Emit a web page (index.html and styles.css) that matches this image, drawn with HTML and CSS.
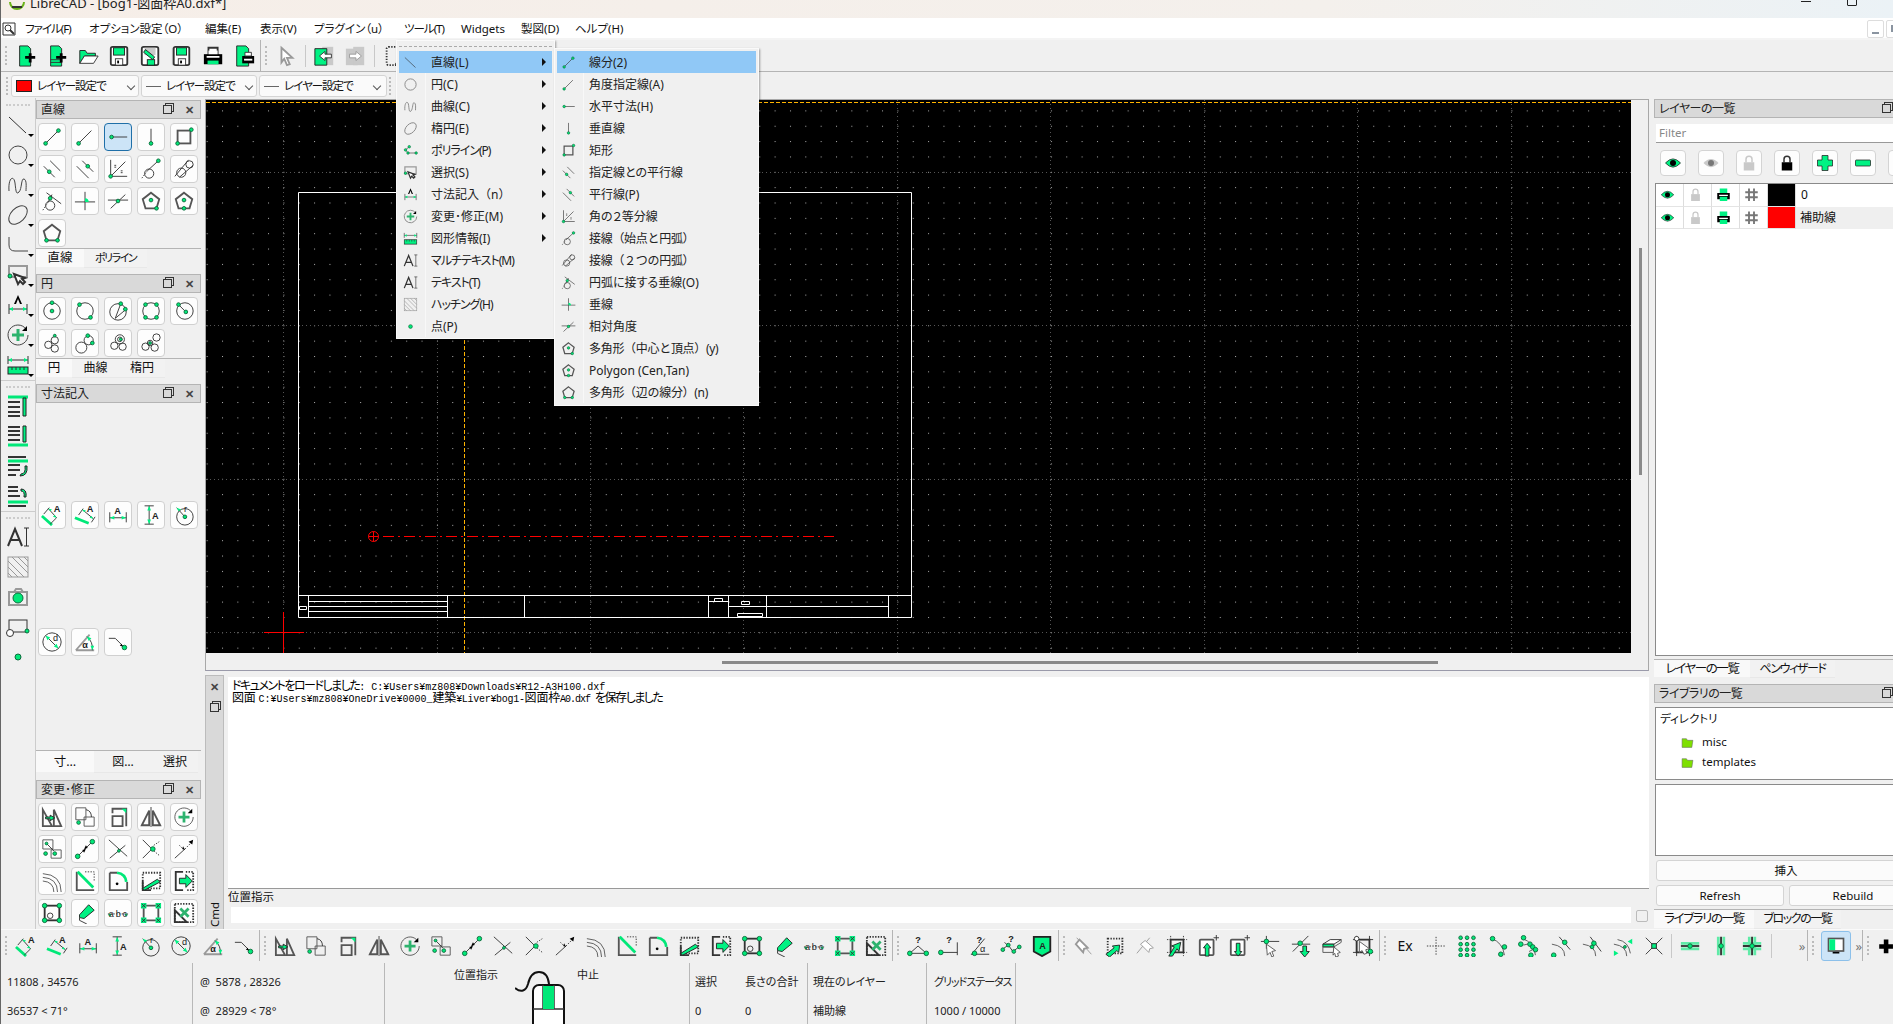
FILE: index.html
```html
<!DOCTYPE html>
<html>
<head>
    <meta charset="utf-8">
    <title>LibreCAD</title>
    <link rel="stylesheet" href="styles.css">
</head>
<body>
<svg class="defs">
    <!-- top toolbar -->
    <symbol id="new" viewBox="0 0 24 24"><path class="gf" d="M5 1h9l3 3v19H5z"/><path class="bk" d="M15 9h3v3h4v3h-4v4h-3v-4h-4v-3h4z"/></symbol>
    <symbol id="newt" viewBox="0 0 24 24"><path class="gf" d="M5 1h9l3 3v19H5z"/><path d="M5 16h12M5 19h12"/><path class="bk" d="M15 9h3v3h4v3h-4v4h-3v-4h-4v-3h4z"/></symbol>
    <symbol id="open" viewBox="0 0 24 24"><path class="gf" d="M3 20V6h6l2 3h9v3H8z"/><path class="wf" d="M3 20l5-8h15l-5 8z"/></symbol>
    <symbol id="save" viewBox="0 0 24 24"><rect class="wf th" x="3" y="2" width="18" height="20" rx="2"/><rect class="gf" x="6" y="3" width="12" height="8"/><rect class="wf" x="8" y="15" width="8" height="7"/><rect class="bk" x="10" y="17" width="2" height="3"/></symbol>
    <symbol id="saveas" viewBox="0 0 24 24"><rect class="wf th" x="3" y="2" width="18" height="20" rx="2"/><rect class="gb" x="6" y="3" width="12" height="8"/><rect class="gf" x="9" y="16" width="8" height="6"/><path class="gf" d="M7 5l10 8-2 3L5 8z"/></symbol>
    <symbol id="saveall" viewBox="0 0 24 24"><path class="gb" d="M2 3h4v19H2z"/><rect class="wf th" x="4" y="2" width="17" height="20" rx="2"/><rect class="gf" x="7" y="3" width="11" height="8"/><rect class="wf" x="9" y="15" width="8" height="7"/><rect class="bk" x="11" y="17" width="2" height="3"/></symbol>
    <symbol id="print" viewBox="0 0 24 24"><path class="wf th" d="M7 3h10v7H7z"/><path class="bk" d="M2 10h20v11H2z"/><path class="gfn" d="M6 17h12v4H6z"/><path class="wfn" d="M7 6h10v4H7zM5 12h14v2H5z"/></symbol>
    <symbol id="prev" viewBox="0 0 24 24"><path class="gf" d="M4 1h10l3 3v19H4z"/><path class="bk" d="M10 12h13v8H10z"/><path class="wfn" d="M12 15h9v2h-9z"/><path class="wf" d="M13 8h7v4h-7z"/></symbol>
    <symbol id="arrow" viewBox="0 0 24 24"><path class="wf gy th" d="M7 3l12 11h-6l3 7-3 1-3-7-3 4z"/></symbol>
    <symbol id="undo" viewBox="0 0 24 24"><path class="gb" d="M10 2h12v20H10z"/><path class="gf" d="M2 4h13v18H2z"/><path class="wf" d="M7 12l6-5v3h7v4h-7v3z"/></symbol>
    <symbol id="redo" viewBox="0 0 24 24"><path class="gb" d="M2 4h13v18H2z"/><path class="gb" d="M10 2h12v20H10z"/><path class="wf gy" d="M6 10h7V7l6 5-6 5v-3H6z"/></symbol>
    <symbol id="cut" viewBox="0 0 24 24"><rect class="da th" x="5" y="2" width="14" height="20" rx="2"/><path d="M16 10l3 9M20 10l-3 9"/><circle cx="16" cy="21" r="1.5"/><circle cx="20" cy="21" r="1.5"/></symbol>
    <!-- main tool menu -->
    <symbol id="tline" viewBox="0 0 24 24"><path d="M3 4l17 16"/></symbol>
    <symbol id="tcirc" viewBox="0 0 24 24"><circle class="gy2" cx="12" cy="12" r="9"/></symbol>
    <symbol id="tspl" viewBox="0 0 24 24"><path class="gy2" d="M3 18C2 4 8 2 9 10s1 12 4 9 2-14 5-13 2 8 2 12"/></symbol>
    <symbol id="tell" viewBox="0 0 24 24"><ellipse class="gy2" cx="12" cy="12" rx="11" ry="7" transform="rotate(-45 12 12)"/></symbol>
    <symbol id="tpoly" viewBox="0 0 24 24"><path d="M10 6L4 11l4 5h14"/><circle class="n" cx="10" cy="6" r="2"/><circle class="n" cx="4" cy="11" r="2"/><circle class="n" cx="8" cy="16" r="2"/><circle class="n" cx="21" cy="16" r="2"/></symbol>
    <symbol id="tpl2" viewBox="0 0 24 24"><path class="gy2" d="M3 4v8q0 6 6 6h13"/></symbol>
    <symbol id="tsel" viewBox="0 0 24 24"><rect class="gy th" x="3" y="3" width="18" height="11"/><path class="wf th" d="M8 11l4 10 2-3 3 3 2-2-3-3 3-1z"/><circle class="n" cx="4" cy="13" r="2"/></symbol>
    <symbol id="tdim" viewBox="0 0 24 24"><path d="M3 11v10M21 11v10M3 16h18"/><path class="gfn" d="M3 16l4-2v4zM21 16l-4-2v4z"/><path class="bk" d="M8 11l4-9 4 9h-2l-2-5-2 5z"/></symbol>
    <symbol id="tmod" viewBox="0 0 24 24"><path class="gy2" d="M20 6a10 10 0 1 0 2 6"/><path class="gs2" d="M12 6v12M6 12h12"/><path class="bk" d="M21 3v5h-5z"/></symbol>
    <symbol id="tinfo" viewBox="0 0 24 24"><path d="M2 3v8M22 3v8M2 7h20"/><path class="gfn" d="M2 7l4-2v4zM22 7l-4-2v4z"/><rect class="gf" x="2" y="14" width="20" height="7"/><path d="M6 14v3M10 14v3M14 14v3M18 14v3"/></symbol>
    <symbol id="tmtxt" viewBox="0 0 24 24"><path class="th" d="M2 21L9 4l7 17M5 15h9"/><path d="M18 3h5M20.500 3v18M18 21h5"/></symbol>
    <symbol id="thatch" viewBox="0 0 24 24"><rect class="gy" x="2" y="2" width="20" height="20"/><path class="gy" d="M2 6l16 16M2 12l10 10M2 18l4 4M6 2l16 16M12 2l10 10M18 2l4 4"/></symbol>
    <symbol id="tpt" viewBox="0 0 24 24"><circle class="n" cx="12" cy="12" r="3"/></symbol>
    <symbol id="tcam" viewBox="0 0 24 24"><rect class="gy th" x="3" y="7" width="18" height="13"/><path class="gy th" d="M8 7l2-3h5l2 3"/><circle class="n" cx="12" cy="13" r="5"/></symbol>
    <symbol id="tblk" viewBox="0 0 24 24"><rect x="3" y="5" width="18" height="12"/><circle class="wf" cx="4" cy="18" r="3.500"/><circle class="n" cx="21" cy="16" r="2"/></symbol>
    <symbol id="o1" viewBox="0 0 24 24"><path class="gs" d="M2 3h20"/><path class="th" d="M2 8h12M2 13h12M2 18h12M2 22h12"/><path class="gf" d="M17 4h3v18h-3z"/></symbol>
    <symbol id="o2" viewBox="0 0 24 24"><path class="gs" d="M2 21h20"/><path class="th" d="M2 3h12M2 7h12M2 11h12M2 16h12"/><path class="gf" d="M17 2h3v16h-3z"/></symbol>
    <symbol id="o3" viewBox="0 0 24 24"><path class="gs" d="M2 7h20"/><path class="th" d="M2 3h18M2 11h12M2 16h12M2 21h8"/><path class="gf" d="M15 20q5 0 4-8h2q1 10-7 10z"/></symbol>
    <symbol id="o4" viewBox="0 0 24 24"><path class="gs" d="M2 18h20"/><path class="th" d="M2 3h10M2 7h10M2 12h12M2 22h18"/><path class="gf" d="M15 5q6 0 5 8h-2q1-6-3-6z"/></symbol>
    <!-- line dock -->
    <symbol id="l2p" viewBox="0 0 24 24"><path d="M5 19L19 5"/><circle class="n" cx="5" cy="19" r="2"/><circle class="n" cx="19" cy="5" r="2"/></symbol>
    <symbol id="lang" viewBox="0 0 24 24"><path d="M5 19L19 5"/><circle class="n" cx="5" cy="19" r="2"/></symbol>
    <symbol id="lhor" viewBox="0 0 24 24"><path d="M5 12h17"/><circle class="n" cx="5" cy="12" r="2"/></symbol>
    <symbol id="lver" viewBox="0 0 24 24"><path d="M12 3v16"/><circle class="n" cx="12" cy="19" r="2"/></symbol>
    <symbol id="lrec" viewBox="0 0 24 24"><rect class="th gm" x="5" y="5" width="14" height="14"/><circle class="n" cx="5" cy="19" r="2"/><circle class="n" cx="20" cy="4" r="2"/></symbol>
    <symbol id="lpar" viewBox="0 0 24 24"><path d="M3 9l12 12M10 3l11 11"/><circle class="n" cx="9" cy="15" r="2"/></symbol>
    <symbol id="lpap" viewBox="0 0 24 24"><path d="M3 9l13 13M9 3l12 12"/><circle class="n" cx="15" cy="9" r="2"/></symbol>
    <symbol id="lbis" viewBox="0 0 24 24"><path d="M4 2v18h18M4 20L20 4"/><path d="M8 8h2M8 10h2M15 14h2M15 16h2"/><circle class="n" cx="4" cy="20" r="2"/></symbol>
    <symbol id="lt1" viewBox="0 0 24 24"><circle cx="10" cy="17" r="5"/><path class="da" d="M2 22L8 14"/><path d="M8 14L20 3"/><circle class="n" cx="20" cy="3" r="2"/></symbol>
    <symbol id="lt2" viewBox="0 0 24 24"><circle cx="9" cy="16" r="5"/><circle cx="18" cy="7" r="4"/><path d="M2 20L17 2M7 21l15-13"/></symbol>
    <symbol id="lor" viewBox="0 0 24 24"><circle cx="10" cy="17" r="5"/><path class="da" d="M2 22L8 13"/><path d="M6 3l16 12M8 13l4-8"/><circle class="n" cx="10" cy="9" r="2"/></symbol>
    <symbol id="lprp" viewBox="0 0 24 24"><path d="M1 13h22M12 2v20"/><path class="gfn" d="M12 13v-4a4 4 0 0 1 4 4z"/></symbol>
    <symbol id="lrel" viewBox="0 0 24 24"><path d="M1 11h22M4 20L20 5"/><circle class="n" cx="12" cy="12" r="2"/></symbol>
    <symbol id="pcv" viewBox="0 0 24 24"><path class="gm th" d="M12 3l9 7-3 10H6L3 10z"/><circle class="n" cx="12" cy="11" r="2"/><circle class="n" cx="18" cy="20" r="2"/></symbol>
    <symbol id="pct" viewBox="0 0 24 24"><path class="gm th" d="M12 3l9 7-3 10H6L3 10z"/><circle class="n" cx="12" cy="11" r="2"/><circle class="n" cx="12" cy="20" r="2"/></symbol>
    <symbol id="psd" viewBox="0 0 24 24"><path class="gm th" d="M12 3l9 7-3 10H6L3 10z"/><circle class="n" cx="6" cy="20" r="2"/><circle class="n" cx="18" cy="20" r="2"/></symbol>
    <!-- circle dock -->
    <symbol id="c1" viewBox="0 0 24 24"><circle cx="12" cy="12" r="9"/><circle class="n" cx="12" cy="3" r="2"/><circle class="n" cx="12" cy="12" r="2"/></symbol>
    <symbol id="c2" viewBox="0 0 24 24"><circle cx="12" cy="12" r="9"/><circle class="n" cx="6" cy="5" r="2"/><circle class="n" cx="18" cy="19" r="2"/></symbol>
    <symbol id="c3" viewBox="0 0 24 24"><circle cx="12" cy="13" r="9"/><path d="M9 20l6-16M9 20l12-10"/><circle class="n" cx="15" cy="4" r="2"/><circle class="n" cx="20" cy="10" r="2"/></symbol>
    <symbol id="c4" viewBox="0 0 24 24"><circle cx="12" cy="12" r="9"/><circle class="n" cx="6" cy="5" r="2"/><circle class="n" cx="18" cy="5" r="2"/><circle class="n" cx="6" cy="19" r="2"/><circle class="n" cx="18" cy="19" r="2"/></symbol>
    <symbol id="c5" viewBox="0 0 24 24"><circle cx="13" cy="12" r="9"/><path d="M6 5l8 8"/><circle class="n" cx="6" cy="5" r="2"/><circle class="n" cx="14" cy="13" r="2"/></symbol>
    <symbol id="c6" viewBox="0 0 24 24"><circle cx="15" cy="9" r="4"/><circle cx="8" cy="14" r="4"/><circle cx="15" cy="18" r="4"/><circle class="n" cx="15" cy="4" r="1.500"/></symbol>
    <symbol id="c7" viewBox="0 0 24 24"><circle cx="8" cy="17" r="6"/><circle cx="16" cy="9" r="5"/><circle class="n" cx="15" cy="4" r="2"/><circle class="n" cx="20" cy="12" r="2"/></symbol>
    <symbol id="c8" viewBox="0 0 24 24"><circle cx="8" cy="15" r="4"/><circle cx="17" cy="16" r="4"/><circle cx="14" cy="8" r="5"/><circle cx="14" cy="8" r="2.500"/><circle class="n" cx="15" cy="8" r="1.500"/></symbol>
    <symbol id="c9" viewBox="0 0 24 24"><circle cx="6" cy="16" r="4"/><circle cx="18" cy="6" r="4"/><circle cx="16" cy="17" r="4"/><circle cx="11" cy="12" r="3"/><circle class="n" cx="11" cy="12" r="1.500"/></symbol>
    <!-- dimensions -->
    <symbol id="da" viewBox="0 0 24 24"><path class="gs" d="M1 13l11 10"/><path d="M3 11L9 4M10 22l7-7M8 5L17 15"/><path class="gfn" d="M8 5l4 1-2 2zM17 15l-4-1 2-2z"/><text class="tx" x="14" y="9">A</text></symbol>
    <symbol id="dl" viewBox="0 0 24 24"><path class="gs" d="M1 15l15 6"/><path d="M5 12L10 5M19 20l4-6M9 6L21 16"/><path class="gfn" d="M9 6l4 1-2 2zM21 16l-4-1 2-2z"/><text class="tx" x="14" y="9">A</text></symbol>
    <symbol id="dh" viewBox="0 0 24 24"><path d="M3 9v11M21 9v11M3 15h18"/><path class="gfn" d="M3 15l5-2v4zM21 15l-5-2v4z"/><text class="tx" x="8" y="11">A</text></symbol>
    <symbol id="dv" viewBox="0 0 24 24"><path d="M5 2h10M5 22h10M10 2v20"/><path class="gfn" d="M10 2l-2 5h4zM10 22l-2-5h4z"/><text class="tx" x="13" y="16">A</text></symbol>
    <symbol id="dr" viewBox="0 0 24 24"><circle cx="13" cy="14" r="9"/><path d="M4 4l9 10"/><path class="gfn" d="M4 4l5 2-3 2z"/><circle class="n" cx="13" cy="14" r="2"/><text class="tx tn" x="12" y="9">r</text></symbol>
    <symbol id="dd" viewBox="0 0 24 24"><circle cx="12" cy="12" r="10"/><path d="M5 5l14 14"/><path class="gfn" d="M5 5l5 2-3 3zM19 19l-5-2 3-3z"/><text class="tx tn" x="13" y="11">d</text></symbol>
    <symbol id="dan" viewBox="0 0 24 24"><path class="gy th" d="M2 21h20M2 21L17 4"/><path d="M14 6q7 6 6 15"/><path class="gfn" d="M14 6l5 2-3 3zM20 21l-2-5h4z"/><text class="tx" x="9" y="19">α</text></symbol>
    <symbol id="dld" viewBox="0 0 24 24"><path d="M2 8h7l9 9"/><circle class="n" cx="19" cy="18" r="2.500"/><path class="bk" d="M16 14l1 3-3-1z"/></symbol>
    <!-- modify -->
    <symbol id="mm" viewBox="0 0 24 24"><path class="th gm" d="M2 4v18h10zM14 4v18h8z"/><path class="gf" d="M5 12h5v-2l5 3-5 3v-2H5z"/></symbol>
    <symbol id="mr" viewBox="0 0 24 24"><path class="gm" d="M2 2h11v13H2zM11 12h11v10H11z"/><path d="M13 4q6 1 6 8"/><circle class="n" cx="5" cy="18" r="2"/></symbol>
    <symbol id="ms" viewBox="0 0 24 24"><path class="gm th" d="M6 11h11v11H6z"/><path class="gm th" d="M6 8V3h15v19"/><path class="gfn" d="M16 3h5v5z"/></symbol>
    <symbol id="mi" viewBox="0 0 24 24"><path class="th gm" d="M2 21L10 5v16zM22 21L14 5v16z"/><path class="gy th" d="M12 1v22"/></symbol>
    <symbol id="mc" viewBox="0 0 24 24"><path class="gm" d="M19 5a10 10 0 1 0 3 7"/><path class="gs2" d="M12 6v12M6 12h12"/><path class="bk" d="M21 3v5h-5z"/></symbol>
    <symbol id="m2" viewBox="0 0 24 24"><path class="gm" d="M2 2h11v10H2zM11 13h11v9H11z"/><path d="M6 6l8 8"/><circle class="n" cx="6" cy="6" r="1.500"/><circle class="n" cx="15" cy="17" r="2"/><circle class="n" cx="5" cy="17" r="2"/></symbol>
    <symbol id="mv" viewBox="0 0 24 24"><path d="M4 20L20 4"/><circle class="n" cx="4" cy="20" r="2.500"/><circle class="n" cx="20" cy="4" r="2.500"/><path class="bk" d="M9 13l4-1-2 4zM15 11l-4 1 2-4z"/></symbol>
    <symbol id="mt" viewBox="0 0 24 24"><path d="M2 2l20 18M3 22L20 8"/><circle class="n" cx="13" cy="14" r="1.500"/></symbol>
    <symbol id="mt2" viewBox="0 0 24 24"><path d="M3 2l10 10-10 10"/><path class="da" d="M15 8l6-4M15 14l6 5"/><circle class="n" cx="14" cy="12" r="2.500"/></symbol>
    <symbol id="me" viewBox="0 0 24 24"><path d="M2 22L13 12"/><path class="da" d="M13 12l8-8M7 8l3 3"/><path class="bk" d="M22 2l-1 5-4-3zM13 13l-2-4-1 3z"/></symbol>
    <symbol id="mo" viewBox="0 0 24 24"><path class="gm" d="M2 4q20 1 20 20M2 8q16 1 16 16M2 12q12 1 12 12"/></symbol>
    <symbol id="mb" viewBox="0 0 24 24"><path class="th gm" d="M3 2v20h19"/><path class="gs" d="M4 2l17 17"/><path class="da" d="M12 2h10v10"/></symbol>
    <symbol id="mf" viewBox="0 0 24 24"><path class="th gm" d="M3 3h8M3 3v19h19V13"/><path class="gs" d="M11 3q9 1 10 10"/><circle class="bk" cx="11" cy="15" r="1.500"/></symbol>
    <symbol id="mst" viewBox="0 0 24 24"><path class="da th" d="M3 3h19v17H3z"/><path class="th" d="M3 12v10h9"/><path class="gf" d="M3 20l16-10 3 3-17 9z"/></symbol>
    <symbol id="mat" viewBox="0 0 24 24"><path class="th" d="M11 2H3v20h8"/><path class="da th" d="M14 2h8v20h-8"/><path class="gf" d="M7 9h7V5l7 7-7 7v-4H7z"/></symbol>
    <symbol id="mp" viewBox="0 0 24 24"><rect class="th" x="4" y="4" width="16" height="16"/><circle cx="10" cy="15" r="3"/><circle class="n" cx="4" cy="4" r="2.500"/><circle class="n" cx="20" cy="4" r="2.500"/><circle class="n" cx="4" cy="20" r="2.500"/><circle class="n" cx="20" cy="20" r="2.500"/></symbol>
    <symbol id="mpn" viewBox="0 0 24 24"><path class="gf" d="M6 14L16 3l6 6-11 9-5-1z"/><path d="M6 17v3l8 4"/></symbol>
    <symbol id="mtx" viewBox="0 0 24 24"><path class="da" d="M1 13h22"/><text class="tx tn" x="2" y="16" textLength="20">abc</text><circle class="n" cx="3" cy="14" r="1"/><circle class="n" cx="21" cy="14" r="1"/></symbol>
    <symbol id="ma" viewBox="0 0 24 24"><path class="th gm" d="M4 4h16v16H4z"/><path class="gfn" d="M1 1h6v6H1zM17 1h6v6h-6zM1 17h6v6H1zM17 17h6v6h-6z"/><path d="M2 2l4 4M6 2L2 6M18 2l4 4M22 2l-4 4M2 18l4 4M6 18l-4 4M18 18l4 4M22 18l-4 4"/></symbol>
    <symbol id="mx" viewBox="0 0 24 24"><path class="da th" d="M2 2h20v20H2z"/><path class="th" d="M2 9l13 13H2z"/><path class="gs2" d="M8 7l9 9M17 7l-9 9"/></symbol>
    <!-- polyline group -->
    <symbol id="p1" viewBox="0 0 24 24"><path d="M3 20h18M3 20l9-8 9 8"/><circle class="n" cx="3" cy="20" r="2.500"/><circle class="n" cx="21" cy="20" r="2.500"/><text class="tx" x="9" y="9">?</text></symbol>
    <symbol id="p2" viewBox="0 0 24 24"><path d="M3 19h18M21 8v14"/><circle class="n" cx="3" cy="19" r="2.500"/><text class="tx" x="9" y="9">?</text></symbol>
    <symbol id="p3" viewBox="0 0 24 24"><path d="M2 21h20M3 21L17 4"/><circle class="n" cx="6" cy="20" r="2.500"/><text class="tx" x="8" y="9">?</text><text class="tx tn" x="12" y="19">α</text></symbol>
    <symbol id="p4" viewBox="0 0 24 24"><path d="M2 16l7-5 5 7 8-6M5 8l5 5"/><circle class="n" cx="3" cy="16" r="2"/><circle class="n" cx="9" cy="11" r="2"/><circle class="n" cx="15" cy="18" r="2"/><circle class="n" cx="21" cy="13" r="2"/><text class="tx" x="9" y="8">?</text></symbol>
    <symbol id="pa" viewBox="0 0 24 24"><path class="gf th" d="M3 2h18v16l-9 5-9-5z"/><text class="tx" x="9" y="15">A</text></symbol>
    <!-- selection group -->
    <symbol id="s1" viewBox="0 0 24 24"><path class="gy" d="M4 3l16 18"/><path class="wf gy th" d="M3 10l8 9 1-4 4-1-9-9z"/></symbol>
    <symbol id="s2" viewBox="0 0 24 24"><path class="da th" d="M4 4h16v16H4z"/><path class="gf" d="M2 21l9-7-2-2 8-1-1 8-2-2-8 7z"/></symbol>
    <symbol id="s3" viewBox="0 0 24 24"><path class="gy" d="M2 20L16 3"/><path class="wf gy" d="M6 10l9 9 1-4 4-1-9-8z"/></symbol>
    <symbol id="s4" viewBox="0 0 24 24"><path class="th" d="M5 5h14v14H5z"/><path class="da" d="M1 5h22M1 19h22M5 1v22M19 1v22"/><path class="gf" d="M3 23l6-10-3-1 10-4-2 10-2-3-5 8z"/></symbol>
    <symbol id="s5" viewBox="0 0 24 24"><rect class="th gm wf" x="3" y="5" width="15" height="17" rx="1"/><path d="M21 0v6M18 3h6"/><path class="gf" d="M11 9l4 5h-2v9h-4v-9H7z"/></symbol>
    <symbol id="s6" viewBox="0 0 24 24"><rect class="th gm wf" x="3" y="5" width="15" height="17" rx="1"/><path d="M21 0v6M18 3h6"/><path class="gf" d="M11 23l4-5h-2V9H9v9H7z"/></symbol>
    <symbol id="s7" viewBox="0 0 24 24"><path d="M2 7h20M8 1v14"/><circle class="n" cx="8" cy="7" r="2.500"/><path class="wf gm" d="M8 10l10 7-4 1 2 5-2 1-2-5-3 3z"/></symbol>
    <symbol id="s8" viewBox="0 0 24 24"><path d="M2 10h20M3 18L20 1"/><circle class="n" cx="11" cy="9" r="2.500"/><path class="gf" d="M14 12h4v6h3l-5 6-5-6h3z"/></symbol>
    <symbol id="s9" viewBox="0 0 24 24"><path class="wf" d="M2 10l8-5h12l-8 5z"/><path class="gf" d="M2 10h12v3H2z"/><path class="gm" d="M2 13h12v6H2zM14 13l8-5V5"/><path class="wf gm" d="M14 13l7 6-3 1 1 3-3 1-1-4-2 2z"/></symbol>
    <symbol id="s10" viewBox="0 0 24 24"><path class="th" d="M5 5h14v14H5z"/><path d="M1 5h22M5 1v22M19 1v22M1 19h22"/><circle class="wf" cx="5" cy="4" r="2.500"/><path class="wf gm" d="M8 7l11 8-4 1 1 4-3 1-2-4-3 2z"/><circle class="n" cx="20" cy="18" r="2.500"/></symbol>
    <!-- snap group -->
    <symbol id="sf" viewBox="0 0 24 24"><path class="da" d="M2 12h20M12 2v20"/></symbol>
    <symbol id="sg" viewBox="0 0 24 24"><circle class="n" cx="5" cy="3" r="2"/><circle class="n" cx="12" cy="3" r="2"/><circle class="n" cx="19" cy="3" r="2"/><circle class="n" cx="5" cy="10" r="2"/><circle class="n" cx="12" cy="10" r="2"/><circle class="n" cx="19" cy="10" r="2"/><circle class="n" cx="5" cy="16" r="2"/><circle class="n" cx="12" cy="16" r="2"/><circle class="n" cx="19" cy="16" r="2"/><circle class="n" cx="5" cy="22" r="2"/><circle class="n" cx="12" cy="22" r="2"/><circle class="n" cx="19" cy="22" r="2"/></symbol>
    <symbol id="se" viewBox="0 0 24 24"><path class="gm" d="M5 4q12 4 14 18"/><circle class="n" cx="6" cy="4" r="2.500"/><circle class="n" cx="19" cy="13" r="2.500"/><circle class="n" cx="15" cy="21" r="2.500"/></symbol>
    <symbol id="sn" viewBox="0 0 24 24"><path class="gm" d="M5 4q12 4 14 18M6 11l8-2M12 18l8-4"/><circle class="n" cx="6" cy="3" r="2.500"/><circle class="n" cx="3" cy="10" r="2.500"/><circle class="n" cx="13" cy="10" r="2.500"/><circle class="n" cx="16" cy="13" r="2.500"/><circle class="n" cx="19" cy="16" r="2.500"/><circle class="n" cx="14" cy="22" r="2.500"/></symbol>
    <symbol id="sc" viewBox="0 0 24 24"><path class="gm" d="M2 10q14 2 14 13"/><path d="M10 2l12 14"/><circle class="n" cx="16" cy="8" r="2.500"/><circle class="n" cx="4" cy="22" r="2.500"/></symbol>
    <symbol id="sm" viewBox="0 0 24 24"><path class="gm" d="M2 10q14 2 14 13"/><path d="M10 2l12 16"/><circle class="n" cx="14" cy="9" r="2.500"/><circle class="n" cx="12" cy="13" r="2"/></symbol>
    <symbol id="sd" viewBox="0 0 24 24"><path class="gm" d="M2 10q14 2 14 13M6 5q12 2 14 15"/><path class="gfn" d="M22 4v6l-5-3zM2 17v6l5-3z"/><circle class="n" cx="14" cy="13" r="1.500"/></symbol>
    <symbol id="si" viewBox="0 0 24 24"><path d="M3 3l18 18M21 3L3 21"/><rect class="gf" x="9.500" y="9.500" width="5" height="5"/></symbol>
    <symbol id="rh" viewBox="0 0 24 24"><path class="gs" d="M2 9h20M2 15h20" opacity=".6"/><path class="th" d="M2 12h20"/><circle class="n" cx="12" cy="12" r="2.500"/></symbol>
    <symbol id="rv" viewBox="0 0 24 24"><path class="gs" d="M9 2v20M15 2v20" opacity=".6"/><path class="th" d="M12 2v20"/><circle class="n" cx="12" cy="12" r="2.500"/></symbol>
    <symbol id="rc" viewBox="0 0 24 24"><path class="gs" d="M2 9h20M2 15h20M9 2v20M15 2v20" opacity=".6"/><path class="th" d="M2 12h20M12 2v20"/><circle class="n" cx="12" cy="12" r="2.500"/></symbol>
    <symbol id="mon" viewBox="0 0 24 24"><rect class="wf th gm" x="3" y="3" width="18" height="15"/><rect class="gfn" x="4" y="4" width="7" height="13"/><path class="bk" d="M8 19h8v2H8z"/></symbol>
    <symbol id="plus" viewBox="0 0 24 24"><path class="bk" d="M9 5h5v5h5v5h-5v5H9v-5H4v-5h5z"/></symbol>
    <!-- layer list -->
    <symbol id="eye" viewBox="0 0 24 24"><path class="gf" d="M2 12q10-11 20 0-10 11-20 0z"/><circle class="bk" cx="12" cy="12" r="4"/></symbol>
    <symbol id="eye2" viewBox="0 0 24 24"><path class="gb" d="M2 12q10-11 20 0-10 11-20 0z"/><circle class="gd" cx="12" cy="12" r="4"/></symbol>
    <symbol id="lock" viewBox="0 0 24 24"><path class="gy2b" d="M8 11V7a4 4 0 0 1 8 0v4"/><rect class="gb" x="5" y="11" width="14" height="11"/></symbol>
    <symbol id="lockb" viewBox="0 0 24 24"><path class="th" d="M8 11V7a4 4 0 0 1 8 0v4"/><rect class="bk" x="5" y="11" width="14" height="11"/></symbol>
    <symbol id="add" viewBox="0 0 24 24"><path class="gf" d="M8 2h8v6h6v8h-6v6H8v-6H2V8h6z"/></symbol>
    <symbol id="del" viewBox="0 0 24 24"><rect class="gf" x="2" y="8" width="20" height="8" rx="1"/></symbol>
    <symbol id="pr" viewBox="0 0 24 24"><path class="gfn" d="M6 2h12v7H6z"/><path class="bk" d="M2 9h20v10H2z"/><path class="gfn" d="M6 15h12v7H6z"/><path class="wfn" d="M5 12h14v2H5z"/></symbol>
    <symbol id="hash" viewBox="0 0 24 24"><path class="hs" d="M8 2v20M16 2v20M2 8h20M2 16h20"/></symbol>
    <symbol id="fold" viewBox="0 0 24 24"><path class="lf" d="M2 5h8l2 3h10l-2 13H2z"/></symbol>
</svg>

<div class="app">
    <div class="titlebar">
        <svg class="appicon" viewBox="0 0 16 12"><path class="ap1" d="M1 0a7 7 0 0 0 14 0"/><path class="ap2" d="M3 5h10"/></svg>
        <span class="titletext">LibreCAD - [bog1-図面枠A0.dxf*]</span>
        <span class="winctl"><i class="wmin"></i><i class="wmax"></i></span>
    </div>

    <div class="menubar">
        <span class="mdi"><svg class="ic" viewBox="0 0 14 14"><path class="wf" d="M1 1h12v12H1z"/><circle cx="6" cy="6" r="3"/><path class="th" d="M8 8l4 4"/></svg></span>
        <span class="mb w1 k">ファイル(F)</span>
        <span class="mb w2">オプション設定（O）</span>
        <span class="mb w3">編集(E)</span>
        <span class="mb w4">表示(V)</span>
        <span class="mb w5">プラグイン（u）</span>
        <span class="mb w6 k">ツール(T)</span>
        <span class="mb w7">Widgets</span>
        <span class="mb w8">製図(D)</span>
        <span class="mb w9">ヘルプ(H)</span>
        <span class="mdibtns"><i class="mdib"><b class="bmin"></b></i><i class="mdib"><b class="bres"></b></i></span>
    </div>
    <div class="barline"></div>

    <div class="toolrow r1">
        <div class="tg"><i class="grip"></i>
            <span class="tb"><svg class="ic"><use href="#new"/></svg></span>
            <span class="tb"><svg class="ic"><use href="#newt"/></svg></span>
            <span class="tb"><svg class="ic"><use href="#open"/></svg></span>
            <span class="tb"><svg class="ic"><use href="#save"/></svg></span>
            <span class="tb"><svg class="ic"><use href="#saveas"/></svg></span>
            <span class="tb"><svg class="ic"><use href="#saveall"/></svg></span>
            <span class="tb"><svg class="ic"><use href="#print"/></svg></span>
            <span class="tb"><svg class="ic"><use href="#prev"/></svg></span>
        </div>
        <div class="tg sm"><i class="grip"></i>
            <span class="tb"><svg class="ic"><use href="#arrow"/></svg></span><i class="vsep"></i>
            <span class="tb"><svg class="ic"><use href="#undo"/></svg></span>
            <span class="tb"><svg class="ic"><use href="#redo"/></svg></span><i class="vsep"></i>
            <span class="tb"><svg class="ic"><use href="#cut"/></svg></span>
        </div>
    </div>

    <div class="toolrow r2">
        <i class="grip"></i>
        <div class="combo c-a"><i class="swatch"></i><span class="k">レイヤー設定で</span><i class="chev"></i></div>
        <div class="combo c-b"><i class="dash"></i><span class="k">レイヤー設定で</span><i class="chev"></i></div>
        <div class="combo c-b"><i class="dash"></i><span class="k">レイヤー設定で</span><i class="chev"></i></div>
        <i class="grip"></i>
    </div>

    <div class="main">
        <div class="ltb">
            <i class="hline top"></i>
            <span class="lt more"><svg class="ic"><use href="#tline"/></svg></span>
            <span class="lt more"><svg class="ic"><use href="#tcirc"/></svg></span>
            <span class="lt more"><svg class="ic"><use href="#tspl"/></svg></span>
            <span class="lt more"><svg class="ic"><use href="#tell"/></svg></span>
            <span class="lt more"><svg class="ic"><use href="#tpl2"/></svg></span>
            <span class="lt more"><svg class="ic"><use href="#tsel"/></svg></span>
            <span class="lt more"><svg class="ic"><use href="#tdim"/></svg></span>
            <span class="lt more"><svg class="ic"><use href="#tmod"/></svg></span>
            <span class="lt more"><svg class="ic"><use href="#tinfo"/></svg></span>
            <i class="hline"></i>
            <span class="lt"><svg class="ic"><use href="#o1"/></svg></span>
            <span class="lt"><svg class="ic"><use href="#o2"/></svg></span>
            <span class="lt"><svg class="ic"><use href="#o3"/></svg></span>
            <span class="lt"><svg class="ic"><use href="#o4"/></svg></span>
            <i class="hline"></i>
            <span class="lt"><svg class="ic"><use href="#tmtxt"/></svg></span>
            <span class="lt"><svg class="ic"><use href="#thatch"/></svg></span>
            <span class="lt"><svg class="ic"><use href="#tcam"/></svg></span>
            <span class="lt"><svg class="ic"><use href="#tblk"/></svg></span>
            <span class="lt"><svg class="ic"><use href="#tpt"/></svg></span>
        </div>

        <div class="docks">
            <div class="dtitle d1"><span>直線</span><i class="float"></i><i class="close">✕</i></div>
            <div class="grid g1">
                <span class="gb1"><svg class="ic"><use href="#l2p"/></svg></span>
                <span class="gb1"><svg class="ic"><use href="#lang"/></svg></span>
                <span class="gb1 on"><svg class="ic"><use href="#lhor"/></svg></span>
                <span class="gb1"><svg class="ic"><use href="#lver"/></svg></span>
                <span class="gb1"><svg class="ic"><use href="#lrec"/></svg></span>
                <span class="gb1"><svg class="ic"><use href="#lpar"/></svg></span>
                <span class="gb1"><svg class="ic"><use href="#lpap"/></svg></span>
                <span class="gb1"><svg class="ic"><use href="#lbis"/></svg></span>
                <span class="gb1"><svg class="ic"><use href="#lt1"/></svg></span>
                <span class="gb1"><svg class="ic"><use href="#lt2"/></svg></span>
                <span class="gb1"><svg class="ic"><use href="#lor"/></svg></span>
                <span class="gb1"><svg class="ic"><use href="#lprp"/></svg></span>
                <span class="gb1"><svg class="ic"><use href="#lrel"/></svg></span>
                <span class="gb1"><svg class="ic"><use href="#pcv"/></svg></span>
                <span class="gb1"><svg class="ic"><use href="#pct"/></svg></span>
                <span class="gb1"><svg class="ic"><use href="#psd"/></svg></span>
            </div>
            <div class="tabs t1"><span class="tab sel w48">直線</span><span class="tab w63 kk">ポリライン</span></div>

            <div class="dtitle d2"><span>円</span><i class="float"></i><i class="close">✕</i></div>
            <div class="grid g2">
                <span class="gb1"><svg class="ic"><use href="#c1"/></svg></span>
                <span class="gb1"><svg class="ic"><use href="#c2"/></svg></span>
                <span class="gb1"><svg class="ic"><use href="#c3"/></svg></span>
                <span class="gb1"><svg class="ic"><use href="#c4"/></svg></span>
                <span class="gb1"><svg class="ic"><use href="#c5"/></svg></span>
                <span class="gb1"><svg class="ic"><use href="#c6"/></svg></span>
                <span class="gb1"><svg class="ic"><use href="#c7"/></svg></span>
                <span class="gb1"><svg class="ic"><use href="#c8"/></svg></span>
                <span class="gb1"><svg class="ic"><use href="#c9"/></svg></span>
            </div>
            <div class="tabs t2"><span class="tab sel w36">円</span><span class="tab w47">曲線</span><span class="tab w46">楕円</span></div>

            <div class="dtitle d3"><span>寸法記入</span><i class="float"></i><i class="close">✕</i></div>
            <div class="grid g3">
                <span class="gb1"><svg class="ic"><use href="#da"/></svg></span>
                <span class="gb1"><svg class="ic"><use href="#dl"/></svg></span>
                <span class="gb1"><svg class="ic"><use href="#dh"/></svg></span>
                <span class="gb1"><svg class="ic"><use href="#dv"/></svg></span>
                <span class="gb1"><svg class="ic"><use href="#dr"/></svg></span>
            </div>
            <div class="grid g4">
                <span class="gb1"><svg class="ic"><use href="#dd"/></svg></span>
                <span class="gb1"><svg class="ic"><use href="#dan"/></svg></span>
                <span class="gb1"><svg class="ic"><use href="#dld"/></svg></span>
            </div>
            <div class="tabs t3"><span class="tab sel w58">寸…</span><span class="tab w58">図…</span><span class="tab w46">選択</span></div>

            <div class="dtitle d4"><span>変更･修正</span><i class="float"></i><i class="close">✕</i></div>
            <div class="grid g5">
                <span class="gb1"><svg class="ic"><use href="#mm"/></svg></span>
                <span class="gb1"><svg class="ic"><use href="#mr"/></svg></span>
                <span class="gb1"><svg class="ic"><use href="#ms"/></svg></span>
                <span class="gb1"><svg class="ic"><use href="#mi"/></svg></span>
                <span class="gb1"><svg class="ic"><use href="#mc"/></svg></span>
                <span class="gb1"><svg class="ic"><use href="#m2"/></svg></span>
                <span class="gb1"><svg class="ic"><use href="#mv"/></svg></span>
                <span class="gb1"><svg class="ic"><use href="#mt"/></svg></span>
                <span class="gb1"><svg class="ic"><use href="#mt2"/></svg></span>
                <span class="gb1"><svg class="ic"><use href="#me"/></svg></span>
                <span class="gb1"><svg class="ic"><use href="#mo"/></svg></span>
                <span class="gb1"><svg class="ic"><use href="#mb"/></svg></span>
                <span class="gb1"><svg class="ic"><use href="#mf"/></svg></span>
                <span class="gb1"><svg class="ic"><use href="#mst"/></svg></span>
                <span class="gb1"><svg class="ic"><use href="#mat"/></svg></span>
                <span class="gb1"><svg class="ic"><use href="#mp"/></svg></span>
                <span class="gb1"><svg class="ic"><use href="#mpn"/></svg></span>
                <span class="gb1"><svg class="ic"><use href="#mtx"/></svg></span>
                <span class="gb1"><svg class="ic"><use href="#ma"/></svg></span>
                <span class="gb1"><svg class="ic"><use href="#mx"/></svg></span>
            </div>
        </div>

        <div class="center">
            <div class="cadframe">
                <svg class="cad" viewBox="206 100 1425 553">
                    <defs>
                        <pattern id="dots" x="283.400" y="632.300" width="15.350" height="15.350" patternUnits="userSpaceOnUse"><rect class="dot" width="1" height="1"/></pattern>
                    </defs>
                    <rect class="cadbg" x="206" y="100" width="1425" height="553"/>
                    <rect x="206" y="100" width="1425" height="553" fill="url(#dots)"/>
                    <path class="major" d="M283.500 100V653M437.500 100V653M590.500 100V653M743.500 100V653M897.500 100V653M1050.500 100V653M1204.500 100V653M1357.500 100V653M1511.500 100V653M206 172.500H1631M206 325.500H1631M206 479.500H1631M206 632.500H1631"/>
                    <path class="rel" d="M206 102.500H1631M464.500 100V653"/>
                    <path class="wl" d="M298.500 192.500H911.500V617.500H298.500ZM298.500 595.500H911.500M308.500 595.500V617.500M447.500 595.500V617.500M524.500 595.500V617.500M708.500 595.500V617.500M728.500 595.500V617.500M766.500 595.500V617.500M888.500 595.500V617.500M308.500 601.500H447.500M308.500 606.500H447.500M308.500 611.500H447.500M299.500 606.500H306.500V609.500H299.500ZM708.500 601.500H728.500M714.500 598.500H722.500V601.500H714.500ZM728.500 606.500H888.500M741.500 601.500H749.500V604.500H741.500ZM737.500 613.500H762.500V616.500H737.500Z"/>
                    <path class="org" d="M264 632.500H304M283.500 612V653"/>
                    <path class="dd" d="M383 536.500H834"/>
                    <circle class="org" cx="373.500" cy="536.500" r="5"/>
                    <path class="org" d="M368.500 536.500H378.500M373.500 531.500V541.500"/>
                </svg>
                <div class="vbar"><i class="vthumb"></i></div>
                <div class="hbar"><i class="hthumb"></i></div>
            </div>

            <div class="cmdrow">
                <div class="cmdbar"><i class="close">✕</i><i class="float"></i><span class="cmdlabel">Cmd</span></div>
                <div class="cmdbody">
                    <div class="log">
                        <p><span class="kl">ドキュメントをロードしました</span><span class="hw">: C:¥Users¥mz808¥Downloads¥R12-A3H100.dxf</span></p>
                        <p>図面 <span class="hw">C:¥Users¥mz808¥OneDrive¥0000_</span>建築<span class="hw n1">¥Liver¥bog1-</span>図面枠<span class="hw n2">A0.dxf </span><span class="kl">を保存しました</span></p>
                    </div>
                    <div class="cmdlab">位置指示</div>
                    <div class="cmdin"><div class="inp"></div><i class="clip"></i></div>
                </div>
            </div>
        </div>

        <div class="right">
            <div class="rinner">
                <div class="dtitle rt1"><span>レイヤーの一覧</span><i class="float"></i></div>
                <div class="filter">Filter</div>
                <div class="lbtns">
                    <span class="lb"><svg class="ic"><use href="#eye"/></svg></span>
                    <span class="lb"><svg class="ic"><use href="#eye2"/></svg></span>
                    <span class="lb"><svg class="ic"><use href="#lock"/></svg></span>
                    <span class="lb"><svg class="ic"><use href="#lockb"/></svg></span>
                    <span class="lb"><svg class="ic"><use href="#add"/></svg></span>
                    <span class="lb"><svg class="ic"><use href="#del"/></svg></span>
                    <span class="lb"></span>
                </div>
                <div class="ltable">
                    <div class="lrow">
                        <span class="lc"><svg class="ic"><use href="#eye"/></svg></span>
                        <span class="lc"><svg class="ic"><use href="#lock"/></svg></span>
                        <span class="lc"><svg class="ic"><use href="#pr"/></svg></span>
                        <span class="lc"><svg class="ic"><use href="#hash"/></svg></span>
                        <span class="lc blk"></span>
                        <span class="lname zero">0</span>
                    </div>
                    <div class="lrow alt">
                        <span class="lc"><svg class="ic"><use href="#eye"/></svg></span>
                        <span class="lc"><svg class="ic"><use href="#lock"/></svg></span>
                        <span class="lc"><svg class="ic"><use href="#pr"/></svg></span>
                        <span class="lc"><svg class="ic"><use href="#hash"/></svg></span>
                        <span class="lc red"></span>
                        <span class="lname">補助線</span>
                    </div>
                </div>
                <div class="tabs r-t1"><span class="tab sel w96">レイヤーの一覧</span><span class="tab w85">ペンウィザード</span></div>
                <div class="dtitle rt2"><span>ライブラリの一覧</span><i class="float"></i></div>
                <div class="lib">
                    <div class="libh">ディレクトリ</div>
                    <div class="libi"><svg class="ic"><use href="#fold"/></svg>misc</div>
                    <div class="libi"><svg class="ic"><use href="#fold"/></svg>templates</div>
                </div>
                <div class="libprev"></div>
                <div class="btn wide">挿入</div>
                <div class="btnrow"><div class="btn half">Refresh</div><div class="btn half">Rebuild</div></div>
                <div class="tabs r-t2"><span class="tab sel w100">ライブラリの一覧</span><span class="tab w87">ブロックの一覧</span></div>
            </div>
        </div>
    </div>

    <div class="bottombar">
        <div class="tg"><i class="grip"></i>
            <span class="tb"><svg class="ic"><use href="#da"/></svg></span>
            <span class="tb"><svg class="ic"><use href="#dl"/></svg></span>
            <span class="tb"><svg class="ic"><use href="#dh"/></svg></span>
            <span class="tb"><svg class="ic"><use href="#dv"/></svg></span>
            <span class="tb"><svg class="ic"><use href="#dr"/></svg></span>
            <span class="tb"><svg class="ic"><use href="#dd"/></svg></span>
            <span class="tb"><svg class="ic"><use href="#dan"/></svg></span>
            <span class="tb"><svg class="ic"><use href="#dld"/></svg></span>
        </div>
        <div class="tg"><i class="grip"></i>
            <span class="tb"><svg class="ic"><use href="#mm"/></svg></span>
            <span class="tb"><svg class="ic"><use href="#mr"/></svg></span>
            <span class="tb"><svg class="ic"><use href="#ms"/></svg></span>
            <span class="tb"><svg class="ic"><use href="#mi"/></svg></span>
            <span class="tb"><svg class="ic"><use href="#mc"/></svg></span>
            <span class="tb"><svg class="ic"><use href="#m2"/></svg></span>
            <span class="tb"><svg class="ic"><use href="#mv"/></svg></span>
            <span class="tb"><svg class="ic"><use href="#mt"/></svg></span>
            <span class="tb"><svg class="ic"><use href="#mt2"/></svg></span>
            <span class="tb"><svg class="ic"><use href="#me"/></svg></span>
            <span class="tb"><svg class="ic"><use href="#mo"/></svg></span>
            <span class="tb"><svg class="ic"><use href="#mb"/></svg></span>
            <span class="tb"><svg class="ic"><use href="#mf"/></svg></span>
            <span class="tb"><svg class="ic"><use href="#mst"/></svg></span>
            <span class="tb"><svg class="ic"><use href="#mat"/></svg></span>
            <span class="tb"><svg class="ic"><use href="#mp"/></svg></span>
            <span class="tb"><svg class="ic"><use href="#mpn"/></svg></span>
            <span class="tb"><svg class="ic"><use href="#mtx"/></svg></span>
            <span class="tb"><svg class="ic"><use href="#ma"/></svg></span>
            <span class="tb"><svg class="ic"><use href="#mx"/></svg></span>
        </div>
        <div class="tg"><i class="grip"></i>
            <span class="tb"><svg class="ic"><use href="#p1"/></svg></span>
            <span class="tb"><svg class="ic"><use href="#p2"/></svg></span>
            <span class="tb"><svg class="ic"><use href="#p3"/></svg></span>
            <span class="tb"><svg class="ic"><use href="#p4"/></svg></span>
            <span class="tb"><svg class="ic"><use href="#pa"/></svg></span>
        </div>
        <div class="tg"><i class="grip"></i>
            <span class="tb"><svg class="ic"><use href="#s1"/></svg></span>
            <span class="tb"><svg class="ic"><use href="#s2"/></svg></span>
            <span class="tb"><svg class="ic"><use href="#s3"/></svg></span>
            <span class="tb"><svg class="ic"><use href="#s4"/></svg></span>
            <span class="tb"><svg class="ic"><use href="#s5"/></svg></span>
            <span class="tb"><svg class="ic"><use href="#s6"/></svg></span>
            <span class="tb"><svg class="ic"><use href="#s7"/></svg></span>
            <span class="tb"><svg class="ic"><use href="#s8"/></svg></span>
            <span class="tb"><svg class="ic"><use href="#s9"/></svg></span>
            <span class="tb"><svg class="ic"><use href="#s10"/></svg></span>
        </div>
        <div class="tg e"><i class="grip"></i>
            <span class="tb extxt">Ex</span>
            <span class="tb"><svg class="ic"><use href="#sf"/></svg></span>
            <span class="tb"><svg class="ic"><use href="#sg"/></svg></span>
            <span class="tb"><svg class="ic"><use href="#se"/></svg></span>
            <span class="tb"><svg class="ic"><use href="#sn"/></svg></span>
            <span class="tb"><svg class="ic"><use href="#sc"/></svg></span>
            <span class="tb"><svg class="ic"><use href="#sm"/></svg></span>
            <span class="tb"><svg class="ic"><use href="#sd"/></svg></span>
            <span class="tb"><svg class="ic"><use href="#si"/></svg></span>
            <i class="vsep2"></i>
            <span class="tb"><svg class="ic"><use href="#rh"/></svg></span>
            <span class="tb"><svg class="ic"><use href="#rv"/></svg></span>
            <span class="tb"><svg class="ic"><use href="#rc"/></svg></span>
            <i class="vsep2 last"></i>
            <span class="more2 a">»</span>
        </div>
        <div class="tg f"><i class="grip"></i>
            <span class="tbon"><svg class="ic"><use href="#mon"/></svg></span>
            <span class="more2">»</span>
        </div>
        <div class="tg g"><i class="grip"></i>
            <span class="tb"><svg class="ic"><use href="#plus"/></svg></span>
        </div>
    </div>

    <div class="status">
        <div class="cell c1"><span>11808 , 34576</span><span>36537 &lt; 71°</span></div>
        <div class="cell c2"><span>@&nbsp; 5878 , 28326</span><span>@&nbsp; 28929 &lt; 78°</span></div>
        <div class="cell c3">
            <span class="mlabel">位置指示</span>
            <svg class="mouse" viewBox="0 0 50 54">
                <path class="mcord" d="M0 18c6 5 11 3 13-4 2-9 6-12 11-12s9 3 10 12"/>
                <rect class="mbody" x="18" y="15" width="31" height="50" rx="6"/>
                <path class="mline" d="M18 39h31M28 15v24M39 15v24"/>
                <rect class="mgreen" x="28" y="16" width="11" height="23"/>
            </svg>
            <span class="mlabel">中止</span>
        </div>
        <div class="cell c4"><span>選択</span><span>長さの合計</span><span>0</span><span>0</span></div>
        <div class="cell c5"><span>現在のレイヤー</span><span>補助線</span></div>
        <div class="cell c6"><span class="k">グリッドステータス</span><span>1000 / 10000</span></div>
    </div>

    <div class="menu first">
        <div class="tearoff"></div>
        <div class="mi on"><svg class="ic"><use href="#tline"/></svg><span>直線(L)</span><b></b></div>
        <div class="mi"><svg class="ic"><use href="#tcirc"/></svg><span>円(C)</span><b></b></div>
        <div class="mi"><svg class="ic"><use href="#tspl"/></svg><span>曲線(C)</span><b></b></div>
        <div class="mi"><svg class="ic"><use href="#tell"/></svg><span>楕円(E)</span><b></b></div>
        <div class="mi"><svg class="ic"><use href="#tpoly"/></svg><span class="k">ポリライン(P)</span><b></b></div>
        <div class="mi"><svg class="ic"><use href="#tsel"/></svg><span>選択(S)</span><b></b></div>
        <div class="mi"><svg class="ic"><use href="#tdim"/></svg><span class="np">寸法記入（n）</span><b></b></div>
        <div class="mi"><svg class="ic"><use href="#tmod"/></svg><span>変更･修正(M)</span><b></b></div>
        <div class="mi"><svg class="ic"><use href="#tinfo"/></svg><span>図形情報(I)</span><b></b></div>
        <div class="mi"><svg class="ic"><use href="#tmtxt"/></svg><span class="k">マルチテキスト(M)</span></div>
        <div class="mi"><svg class="ic"><use href="#tmtxt"/></svg><span class="k">テキスト(T)</span></div>
        <div class="mi"><svg class="ic"><use href="#thatch"/></svg><span class="k">ハッチング(H)</span></div>
        <div class="mi"><svg class="ic"><use href="#tpt"/></svg><span>点(P)</span></div>
    </div>
    <div class="menu second">
        <div class="mi on"><svg class="ic"><use href="#l2p"/></svg><span>線分(2)</span></div>
        <div class="mi"><svg class="ic"><use href="#lang"/></svg><span>角度指定線(A)</span></div>
        <div class="mi"><svg class="ic"><use href="#lhor"/></svg><span>水平寸法(H)</span></div>
        <div class="mi"><svg class="ic"><use href="#lver"/></svg><span>垂直線</span></div>
        <div class="mi"><svg class="ic"><use href="#lrec"/></svg><span>矩形</span></div>
        <div class="mi"><svg class="ic"><use href="#lpar"/></svg><span>指定線との平行線</span></div>
        <div class="mi"><svg class="ic"><use href="#lpap"/></svg><span>平行線(P)</span></div>
        <div class="mi"><svg class="ic"><use href="#lbis"/></svg><span>角の２等分線</span></div>
        <div class="mi"><svg class="ic"><use href="#lt1"/></svg><span class="np nq">接線（始点と円弧）</span></div>
        <div class="mi"><svg class="ic"><use href="#lt2"/></svg><span class="np nq">接線（２つの円弧）</span></div>
        <div class="mi"><svg class="ic"><use href="#lor"/></svg><span>円弧に接する垂線(O)</span></div>
        <div class="mi"><svg class="ic"><use href="#lprp"/></svg><span>垂線</span></div>
        <div class="mi"><svg class="ic"><use href="#lrel"/></svg><span>相対角度</span></div>
        <div class="mi"><svg class="ic"><use href="#pcv"/></svg><span class="np nq">多角形（中心と頂点）(y)</span></div>
        <div class="mi"><svg class="ic"><use href="#pct"/></svg><span>Polygon (Cen,Tan)</span></div>
        <div class="mi"><svg class="ic"><use href="#psd"/></svg><span class="np nq">多角形（辺の線分）(n)</span></div>
    </div>
</div>
</body>
</html>
```

FILE: styles.css
```css
*{
    box-sizing: border-box;
}
html{
    height: 1024px;
    overflow: hidden;
}
html,body{
    margin: 0;
    padding: 0;
}
body{
    width: 1893px;
    height: 1024px;
    overflow: hidden;
    background-color: #f0f0f0;
    font-family: "Noto Sans", "Noto Sans CJK JP", sans-serif;
    font-size: 11.500px;
    font-feature-settings: "palt";
    line-height: 14px;
    color: #111;
}
i,b{
    font-style: normal;
    display: block;
}
p{
    margin: 0;
}
.defs{
    position: absolute;
    width: 0;
    height: 0;
}

/* kana in the screenshot's font is narrower than Noto's */
.k{letter-spacing: -1px;}
.kk{letter-spacing: -1.500px; font-size: 11px;}
.kl{letter-spacing: -1.500px;}
.np{font-feature-settings: normal;}
.nq{letter-spacing: -0.300px;}

/* icon parts */
.ic{
    display: block;
    width: 100%;
    height: 100%;
    fill: none;
    stroke: #333;
    stroke-width: 1;
}
.n{fill: #00e878; stroke: #0d6a3c;}
.gf{fill: #00f283; stroke: #222;}
.gfn{fill: #00f283; stroke: none;}
.wf{fill: #fff;}
.wfn{fill: #fff; stroke: none;}
.bk{fill: #000; stroke: none;}
.gb{fill: #c9c9c9; stroke: none;}
.gd{fill: #777; stroke: none;}
.gy{stroke: #999;}
.gy2{stroke: var(--st, #888); stroke-width: var(--sw, 1.500);}
.gy2b{stroke: #c9c9c9; stroke-width: 2;}
.gm{stroke: #555;}
.gs{stroke: #00e878; stroke-width: 3;}
.gs2{stroke: #2db36e; stroke-width: 3;}
.th{stroke-width: 2;}
.da{stroke-dasharray: 1.5 1.5;}
.hs{stroke: #777; stroke-width: 3;}
.lf{fill: #7ee000; stroke: #666;}
.tx{
    font-family: "Liberation Sans", sans-serif;
    font-size: 10px;
    font-weight: bold;
    fill: #222;
    stroke: none;
}
.tn{font-weight: normal;}

/* title + menubar */
.app{
    position: relative;
    height: 1024px;
    display: flex;
    flex-direction: column;
    border-left: 1px solid #666;
}
.titlebar{
    height: 18px;
    flex: none;
    overflow: hidden;
    background: linear-gradient(90deg, #f6eee8 0%, #f4f0ec 70%, #ebf2f6 100%);
    display: flex;
    align-items: flex-end;
    padding-bottom: 8px;
    font-size: 13px;
    color: #222;
}
.appicon{
    width: 16px;
    height: 12px;
    margin-left: 8px;
    margin-right: 5px;
    margin-bottom: -4px;
    flex: none;
}
.ap1{fill: none; stroke: #6cb31a; stroke-width: 2;}
.ap2{fill: none; stroke: #333; stroke-width: 2;}
.winctl{
    margin-left: auto;
    display: flex;
    align-items: flex-end;
    margin-bottom: 4px;
    margin-right: 36px;
}
.wmin{
    width: 10px;
    height: 1px;
    background-color: #222;
    margin-bottom: 4px;
    margin-right: 36px;
}
.wmax{
    width: 10px;
    height: 10px;
    border: 1px solid #222;
    border-radius: 1px;
}
.menubar{
    height: 20px;
    flex: none;
    background-color: #fff;
    display: flex;
    align-items: center;
    padding-top: 2px;
}
.mdi{
    width: 14px;
    height: 14px;
    margin-left: 1px;
    margin-right: 9px;
}
.mb{flex: none;}
.w1{width: 64px;}
.w2{width: 116px;}
.w3{width: 55px;}
.w4{width: 54px;}
.w5{width: 90px;}
.w6{width: 57px;}
.w7{width: 60px;}
.w8{width: 54px;}
.w9{width: 60px;}
.mdibtns{
    margin-left: auto;
    display: flex;
    gap: 2px;
    margin-right: -10px;
}
.mdib{
    width: 17px;
    height: 18px;
    border: 1px solid #ddd;
    border-radius: 2px;
    position: relative;
}
.bmin{
    position: absolute;
    left: 4px;
    bottom: 3px;
    width: 7px;
    height: 2px;
    background-color: #8a94a0;
}
.bres{
    position: absolute;
    left: 4px;
    top: 4px;
    width: 7px;
    height: 7px;
    border: 2px solid #8a94a0;
}
.barline{
    height: 2px;
    flex: none;
    background-color: #f4f4f4;
}

/* toolbars */
.toolrow{
    display: flex;
    flex: none;
    align-items: center;
}
.r1{
    height: 32px;
    border-bottom: 1px solid #b4b4b4;
}
.r2{
    height: 26px;
    gap: 2px;
    align-items: flex-start;
    padding-top: 3px;
    padding-left: 5px;
}
.tg{
    display: flex;
    align-items: center;
    height: 100%;
    border-right: 1px solid #b4b4b4;
    flex: none;
    padding-left: 9.500px;
    position: relative;
}
.grip{
    position: absolute;
    left: 4px;
    top: 6px;
    bottom: 6px;
    width: 3px;
    border-left: 2px dotted #bbb;
}
.r1 .tg{
    padding-right: 0;
    width: 260px;
}
.r1 .tg.sm{
    border-right: 0;
    width: auto;
}
.r2 .grip{
    position: static;
    height: 18px;
    margin-top: 2px;
}
.tb{
    display: block;
    width: 31.100px;
    height: 22px;
    padding: 0 4.500px;
    flex: none;
}
.vsep{
    width: 1px;
    height: 22px;
    background-color: #c8c8c8;
    flex: none;
    margin: 0 3px;
}
.combo{
    height: 22px;
    background-color: #fafafa;
    border: 1px solid #d4d4d4;
    border-radius: 3px;
    display: flex;
    align-items: center;
    position: relative;
    flex: none;
}
.c-a{
    width: 128px;
    padding-left: 4px;
}
.c-b{
    width: 116px;
    padding-left: 4px;
}
.c-b + .c-b{
    width: 128px;
}
.swatch{
    width: 16px;
    height: 12px;
    background-color: #f00;
    border: 1px solid #222;
    margin-right: 5px;
}
.dash{
    width: 15px;
    height: 1px;
    background-color: #666;
    margin-right: 5px;
}
.chev{
    position: absolute;
    right: 4px;
    top: 7px;
    width: 6px;
    height: 6px;
    border-right: 1px solid #555;
    border-bottom: 1px solid #555;
    transform: rotate(45deg);
}
.c-b + .c-b .chev{
    right: 6px;
}

/* main area */
.main{
    height: 831px;
    flex: none;
    display: flex;
}
.ltb{
    width: 35px;
    flex: none;
    border-right: 1px solid #ccc;
    padding-top: 1px;
    display: flex;
    flex-direction: column;
    --st: #444;
    --sw: 1;
}
.lt{
    display: block;
    height: 30px;
    padding: 3px 5px;
    position: relative;
    flex: none;
}
.more::after{
    content: "";
    position: absolute;
    right: 1px;
    bottom: 3px;
    border-left: 3px solid transparent;
    border-right: 3px solid transparent;
    border-top: 3px solid #000;
}
.hline{
    height: 11px;
    margin-bottom: 0;
    border-top: 1px solid #ccc;
    position: relative;
    flex: none;
}
.hline.top{
    border-top: 0;
}
.hline::after{
    content: "";
    position: absolute;
    left: 5px;
    right: 5px;
    top: 5px;
    border-top: 2px dotted #ccc;
}

/* docks */
.docks{
    width: 165px;
    flex: none;
    display: flex;
    flex-direction: column;
}
.dtitle{
    height: 19px;
    flex: none;
    background-color: #d9d9d9;
    border: 1px solid #b4b4b4;
    display: flex;
    align-items: center;
    padding-left: 4px;
    font-size: 12px;
    color: #222;
}
.dtitle span{
    flex: 1;
    padding-top: 1px;
}
.float{
    width: 9px;
    height: 9px;
    border: 1px solid #333;
    box-shadow: 2px -2px 0 -1px #d9d9d9, 2px -2px 0 0 #333;
    margin-right: 13px;
    flex: none;
}
.close{
    font-size: 11px;
    font-weight: bold;
    color: #444;
    width: 12px;
    margin-right: 3px;
    flex: none;
}
.d1{margin-top: 2px;}
.d2{margin-top: 6px;}
.d3{margin-top: 6px;}
.d4{margin-top: 7px;}
.grid{
    display: grid;
    grid-template-columns: repeat(5, 28px);
    grid-auto-rows: 28px;
    column-gap: 5px;
    row-gap: 4px;
    padding-left: 2px;
    flex: none;
}
.g1{padding-top: 4px;}
.g2{padding-top: 4px;}
.g3{margin-top: 98px;}
.g4{margin-top: 99px;}
.g5{padding-top: 4px;}
.gb1{
    display: block;
    background-color: #fdfdfd;
    border: 1px solid #d0d0d0;
    border-radius: 4px;
    padding: 2px;
}
.gb1.on{
    background-color: #cce4f7;
    border-color: #1f6fa8;
}
.tabs{
    display: flex;
    flex: none;
    height: 20px;
    border-top: 1px solid #b4b4b4;
    margin-top: 1px;
    align-items: stretch;
}
.tab{
    display: flex;
    align-items: center;
    justify-content: center;
    font-size: 12px;
    background-color: #f2f2f2;
    border-bottom: 1px solid #e8e8e8;
    flex: none;
}
.tab.sel{
    background-color: #f9f9f9;
    border-bottom: 1px solid #f0f0f0;
    font-size: 12.500px;
}
.tab.kk{
    font-size: 11px;
}
.t3{
    height: 23px;
    margin-top: 94px;
}
.w36{width: 36px;}
.w46{width: 46px;}
.w47{width: 47px;}
.w48{width: 48px;}
.w58{width: 58px;}
.w63{width: 63px;}
.w85{width: 85px;}
.w87{width: 87px;}
.w96{width: 96px;}
.w100{width: 100px;}

/* drawing area */
.center{
    width: 1444px;
    margin-left: 4px;
    flex: none;
    display: flex;
    flex-direction: column;
}
.cadframe{
    margin-top: 1px;
    height: 572px;
    flex: none;
    border: 1px solid #a8a8a8;
    border-bottom-color: #9a9aaa;
    display: grid;
    grid-template-columns: 1425px 17px;
    grid-template-rows: 553px 17px;
}
.cad{
    display: block;
    width: 1425px;
    height: 553px;
}
.cadbg{fill: #000;}
.dot{fill: #b0b0b0;}
.major{
    fill: none;
    stroke: #555;
    stroke-width: 1;
    stroke-dasharray: 1 3;
}
.rel{
    fill: none;
    stroke: #ffb400;
    stroke-width: 1;
    stroke-dasharray: 4 2;
}
.wl{
    fill: none;
    stroke: #fff;
    stroke-width: 1;
}
.org{
    fill: none;
    stroke: #f00;
    stroke-width: 1;
}
.dd{
    fill: none;
    stroke: #f00;
    stroke-width: 1;
    stroke-dasharray: 11 4 2 4;
}
.vbar{
    grid-row: 1 / 3;
    grid-column: 2;
    padding-top: 148px;
    padding-left: 8px;
}
.vthumb{
    width: 3px;
    height: 227px;
    background-color: #8a8a8a;
}
.hbar{
    padding-top: 8px;
    padding-left: 516px;
}
.hthumb{
    height: 3px;
    width: 716px;
    background-color: #8a8a8a;
}
.cmdrow{
    margin-top: 4px;
    flex: 1;
    display: flex;
    min-height: 0;
}
.cmdbar{
    width: 19px;
    flex: none;
    background-color: #d9d9d9;
    border: 1px solid #bcbcbc;
    border-bottom: 0;
    display: flex;
    flex-direction: column;
    align-items: center;
    padding-top: 4px;
}
.cmdbar .close{
    margin: 0 0 9px 0;
    text-align: center;
}
.cmdbar .float{
    margin: 0;
}
.cmdlabel{
    margin-top: auto;
    margin-bottom: 2px;
    writing-mode: vertical-rl;
    transform: rotate(180deg);
    font-family: "Noto Sans", sans-serif;
    font-size: 11.500px;
    line-height: 14px;
}
.cmdbody{
    flex: 1;
    margin-left: 4px;
    display: flex;
    flex-direction: column;
    min-width: 0;
}
.log{
    margin-top: 2px;
    height: 212px;
    flex: none;
    background-color: #fff;
    border-bottom: 1px solid #999;
    padding: 3px 0 0 4px;
    font-size: 12px;
    line-height: 12px;
    color: #000;
    letter-spacing: -0.200px;
}
.log p{
    height: 12px;
    white-space: nowrap;
}
.hw{
    font-family: "Liberation Mono", "Noto Sans CJK JP", monospace;
    font-size: 10px;
    letter-spacing: 0;
}
.n1{letter-spacing: -0.300px;}
.n2{letter-spacing: -1px;}
.cmdlab{
    height: 18px;
    flex: none;
    line-height: 15px;
}
.cmdin{
    display: flex;
    align-items: flex-end;
    padding-left: 3px;
}
.inp{
    width: 1400px;
    height: 16px;
    background-color: #fff;
}
.clip{
    width: 12px;
    height: 12px;
    margin-left: 5px;
    border: 1px solid #bbb;
    border-radius: 2px;
    margin-bottom: 1px;
}

/* right panel */
.right{
    width: 239px;
    margin-left: 5px;
    flex: none;
    overflow: hidden;
}
.rinner{
    width: 262px;
    padding-top: 1px;
    display: flex;
    flex-direction: column;
}
.rt1 .float, .rt2 .float{
    margin-right: 24px;
}
.rt1 span, .rt2 span{
    letter-spacing: -0.500px;
}
.filter{
    margin-top: 6px;
    margin-left: 2px;
    height: 19px;
    background-color: #fff;
    border-bottom: 1px solid #999;
    color: #888;
    padding: 2px 3px;
}
.lbtns{
    display: flex;
    gap: 12px;
    margin-top: 7px;
    padding-left: 6px;
}
.lb{
    display: block;
    width: 26px;
    height: 26px;
    flex: none;
    background-color: #fdfdfd;
    border: 1px solid #d4d4d4;
    border-radius: 4px;
    padding: 3px;
}
.ltable{
    margin-top: 7px;
    margin-left: 1px;
    height: 473px;
    flex: none;
    background-color: #fff;
    border: 1px solid #8a8a8a;
    border-right: 0;
}
.lrow{
    display: flex;
    height: 22.500px;
    background-color: #fff;
}
.alt{
    background-color: #efefef;
}
.lc{
    display: block;
    width: 28px;
    height: 100%;
    flex: none;
    border-right: 1px solid #ddd;
    border-bottom: 1px solid #e4e4e4;
    padding: 3px 8px 3px 4px;
    background-color: #fff;
}
.blk{background-color: #000;}
.red{background-color: #f00;}
.lname{
    padding-left: 4px;
    font-size: 12px;
    line-height: 22px;
}
.zero{
    padding-left: 5px;
    color: #111;
}
.r-t1{
    margin-top: 3px;
    height: 19px;
}
.r-t1 .tab, .r-t2 .tab{
    letter-spacing: -1.400px;
}
.rt2{
    margin-top: 6px;
}
.lib{
    margin-top: 4px;
    margin-left: 1px;
    height: 73px;
    flex: none;
    background-color: #fff;
    border: 1px solid #8a8a8a;
    padding: 4px 4px;
}
.libh{
    height: 20px;
}
.libi{
    display: flex;
    align-items: center;
    height: 20px;
    padding-left: 21px;
}
.libi .ic{
    width: 13px;
    height: 13px;
    margin-right: 8px;
    flex: none;
}
.libprev{
    margin-top: 4px;
    margin-left: 1px;
    height: 72px;
    flex: none;
    background-color: #fff;
    border: 1px solid #8a8a8a;
}
.btn{
    background-color: #fbfbfb;
    border: 1px solid #d4d4d4;
    border-radius: 3px;
    display: flex;
    align-items: center;
    justify-content: center;
}
.wide{
    margin-top: 4px;
    margin-left: 2px;
    height: 21px;
    flex: none;
}
.btnrow{
    margin-top: 4px;
    margin-left: 2px;
    display: flex;
    gap: 5px;
}
.half{
    width: 128px;
    height: 21px;
    flex: none;
}
.r-t2{
    margin-top: 3px;
}

/* bottom toolbar */
.bottombar{
    height: 34px;
    flex: none;
    display: flex;
    border-top: 1px solid #fafafa;
    padding-bottom: 2px;
}
.tg.e{
    width: 428px;
}
.tg.f{
    width: 55px;
}
.tg.g{
    border-right: 0;
}
.extxt{
    font-size: 14px;
    line-height: 22px;
    text-align: center;
}
.vsep2{
    width: 1px;
    height: 24px;
    background-color: #c8c8c8;
    margin: 0 2px;
    flex: none;
}
.vsep2.last{
    margin-left: 3px;
}
.more2{
    color: #777;
    font-size: 13px;
    margin-left: 5px;
}
.more2.a{
    margin-left: 25px;
}
.tbon{
    display: block;
    width: 30px;
    height: 30px;
    padding: 4px;
    flex: none;
    background-color: #cce4f7;
    border: 1px solid #8cc0ea;
    border-radius: 3px;
    margin-left: 3px;
}
.tg.g .tb{
    padding: 0 4px;
    margin-left: -2px;
}

/* status */
.status{
    height: 61px;
    flex: none;
    display: flex;
    overflow: hidden;
    font-size: 11px;
}
.cell{
    flex: none;
    border-left: 1px solid #b8b8b8;
    display: grid;
    grid-template-rows: 29px 29px;
    align-items: center;
    padding-top: 4px;
    color: #222;
    height: 61px;
}
.c1{
    width: 191px;
    border-left: 0;
    padding-left: 6px;
}
.c2{
    width: 192px;
    padding-left: 7px;
}
.c3{
    width: 305px;
    display: flex;
    align-items: flex-start;
    padding-left: 69px;
    padding-top: 5px;
}
.c4{
    width: 118px;
    grid-template-columns: 50px auto;
    padding-left: 5px;
}
.c5{
    width: 119px;
    padding-left: 5px;
}
.c6{
    width: 90px;
    padding-left: 7px;
    border-right: 1px solid #b8b8b8;
    white-space: nowrap;
}
.mouse{
    width: 50px;
    height: 54px;
    margin: 2px 12px 0 17px;
    flex: none;
}
.mcord{fill: none; stroke: #111; stroke-width: 2;}
.mbody{fill: #fff; stroke: #111; stroke-width: 2;}
.mline{fill: none; stroke: #333; stroke-width: 1.500;}
.mgreen{fill: #00e878;}

/* popup menus */
.menu{
    position: absolute;
    background-color: #f0f0f0;
    border: 1px solid #fafafa;
    box-shadow: 1px 1px 2px rgba(0,0,0,0.35);
    padding: 2px;
    color: #222;
    font-size: 12px;
}
.first{
    left: 395px;
    top: 40px;
    width: 159px;
    height: 299px;
    padding-top: 0;
}
.second{
    left: 553px;
    top: 48px;
    width: 205px;
    height: 358px;
}
.tearoff{
    height: 10px;
    padding-top: 5px;
}
.tearoff::before{
    content: "";
    display: block;
    border-top: 1px dashed #aaa;
}
.mi{
    height: 22px;
    display: flex;
    align-items: center;
    position: relative;
    padding-left: 4px;
    white-space: nowrap;
}
.mi span{
    padding-top: 1px;
}
.mi .ic{
    width: 15px;
    height: 15px;
    flex: none;
    margin-right: 13px;
}
.mi::before{
    content: "";
    position: absolute;
    left: 26px;
    top: 0;
    bottom: 0;
    width: 1px;
    background-color: #f8f8f8;
}
.mi.on{
    background-color: #90c8f6;
}
.mi.on::before{
    display: none;
}
.mi b{
    position: absolute;
    right: 6px;
    top: 7px;
    border-left: 4px solid #111;
    border-top: 4px solid transparent;
    border-bottom: 4px solid transparent;
}
```
